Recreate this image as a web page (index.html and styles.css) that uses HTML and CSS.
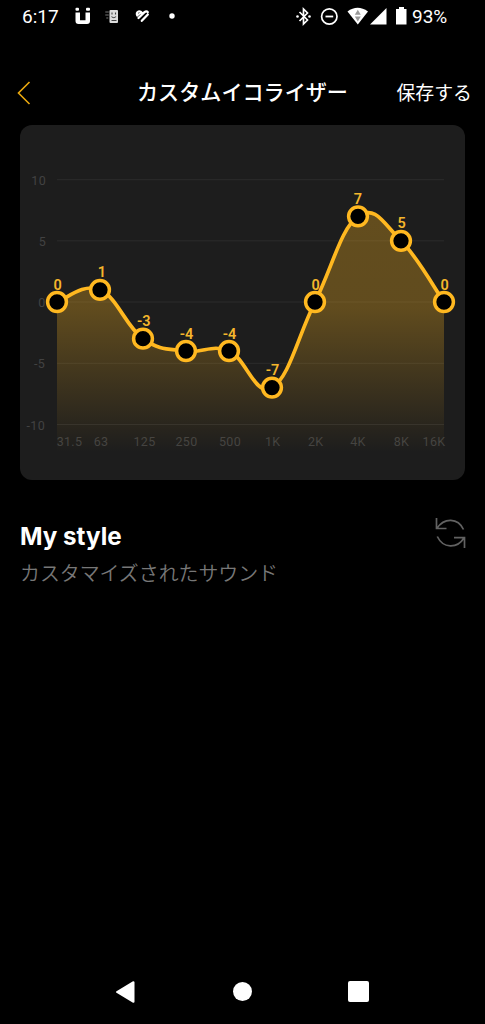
FILE: index.html
```html
<!DOCTYPE html>
<html lang="ja">
<head>
<meta charset="utf-8">
<title>カスタムイコライザー</title>
<link rel="stylesheet" href="styles.css">
</head>
<body>
<div class="screen">
  <div class="status">
    <span class="clock">6:17</span>
    <svg class="notices" width="110" height="33" viewBox="70 0 110 33">
      <g fill="#fff">
        <path d="M75.500 12.500H80V20.300H85.500V12.500H90V21q0 3-3 3H78.500q-3 0-3-3z"/>
        <rect x="75.500" y="7.700" width="3.500" height="3" rx="1"/><rect x="86" y="7.700" width="4" height="3" rx="1"/>
        <rect x="109.500" y="10" width="8.500" height="13" rx="1" fill="#ddd"/>
        <path d="M105.500 12h3M105.500 15h3M106.500 18h2" stroke="#aaa" stroke-width="1.200" stroke-dasharray="1.200 .6"/>
        <path d="M112 12.500v2M115.500 12.500v2M111.500 16.500q2.200 2.500 4.500 0M111.500 20.500h5" stroke="#444" stroke-width="1.100" fill="none"/>
        <circle cx="172" cy="16" r="2.700"/>
      </g>
      <path d="M137.300 15.500Q136 12.500 138.500 11.500Q140.500 11 142 13M138.500 18L144.500 12.200Q146.500 10.500 147.800 12.200M141.800 20.800L147.800 14.500" fill="none" stroke="#fff" stroke-width="2.300" stroke-linecap="round"/>
      <path d="M137.300 15.300L141.500 12.500" stroke="#fff" stroke-width="1.800"/>
    </svg>
    <svg class="signals" width="118" height="33" viewBox="292 0 118 33">
      <path d="M299.500 12l8 8-4 4V9l4 4-8 8" fill="none" stroke="#fff" stroke-width="1.700"/>
      <circle cx="297.500" cy="16.500" r="1.300" fill="#fff"/><circle cx="309.500" cy="16.500" r="1.300" fill="#fff"/>
      <circle cx="329.300" cy="16.500" r="7.700" fill="none" stroke="#fff" stroke-width="1.700"/>
      <path d="M325.500 16.500h7.700" stroke="#fff" stroke-width="1.800"/>
      <path d="M347.500 11.500q10-7.500 20.500 0l-10.200 13z" fill="#fff"/>
      <path d="M354.800 14.800l3-5 3 5zM354.800 16.500h6l-3 5z" fill="#999"/>
      <path d="M370 24.500L386.500 8v16.500z" fill="#fff"/>
      <path d="M399 7h5v2h2.500v15.500h-10.500V9h3z" fill="#fff"/>
    </svg>
    <span class="battery">93%</span>
  </div>

  <header class="header">
    <svg class="back" width="14" height="24" viewBox="0 0 14 24"><path d="M12.500 1L1.500 12l11 11" fill="none" stroke="#eba90f" stroke-width="1.600"/></svg>
    <h1 class="title">カスタムイコライザー</h1>
    <span class="save">保存する</span>
  </header>

  <section class="card">
    <svg class="chart" width="445" height="355" viewBox="20 125 445 355">
      <defs>
        <linearGradient id="fade" gradientUnits="userSpaceOnUse" x1="0" y1="212" x2="0" y2="452">
          <stop offset="0" stop-color="#ffb820" stop-opacity=".31"/>
          <stop offset=".4" stop-color="#ffb820" stop-opacity=".3"/>
          <stop offset="1" stop-color="#ffb820" stop-opacity="0"/>
        </linearGradient>
      </defs>
      <path class="grid" d="M57 179.700H444M57 240.800H444M57 302H444M57 363.300H444M57 424.500H444"/>
      <g class="axis axis-y">
        <text x="46" y="184.800">10</text><text x="46" y="245.500">5</text><text x="45.500" y="307">0</text><text x="45" y="368">-5</text><text x="45" y="429.500">-10</text>
      </g>
      <g class="axis">
        <text x="69.500" y="446">31.5</text><text x="101" y="446">63</text><text x="144.500" y="446">125</text><text x="186.500" y="446">250</text><text x="230" y="446">500</text><text x="272.700" y="446">1K</text><text x="315.700" y="446">2K</text><text x="358" y="446">4K</text><text x="401.500" y="446">8K</text><text x="434" y="446">16K</text>
      </g>
      <path fill="url(#fade)" d="M57 302C65.600 299.600 82.800 282.500 100 289.800C117.200 297.100 125.800 326.500 143 338.700C160.200 350.900 168.800 348.500 186 351C203.200 353.500 211.800 343.700 229 351C246.200 358.300 254.800 397.400 272 387.600C289.200 377.800 297.800 336.300 315 302C332.200 267.700 340.800 228.500 358 216.300C375.200 204.100 383.800 223.700 401 240.800C418.200 257.900 435.400 289.800 444 302V452H57Z"/>
      <path class="curve" d="M57 302C65.600 299.600 82.800 282.500 100 289.800C117.200 297.100 125.800 326.500 143 338.700C160.200 350.900 168.800 348.500 186 351C203.200 353.500 211.800 343.700 229 351C246.200 358.300 254.800 397.400 272 387.600C289.200 377.800 297.800 336.300 315 302C332.200 267.700 340.800 228.500 358 216.300C375.200 204.100 383.800 223.700 401 240.800C418.200 257.900 435.400 289.800 444 302"/>
      <g class="knobs">
        <circle cx="57" cy="302" r="9.400"/><circle cx="100" cy="289.800" r="9.400"/><circle cx="143" cy="338.700" r="9.400"/><circle cx="186" cy="351" r="9.400"/><circle cx="229" cy="351" r="9.400"/><circle cx="272" cy="387.600" r="9.400"/><circle cx="315" cy="302" r="9.400"/><circle cx="358" cy="216.300" r="9.400"/><circle cx="401" cy="240.800" r="9.400"/><circle cx="444" cy="302" r="9.400"/>
      </g>
      <g class="values">
        <text x="57.700" y="289.700">0</text><text x="102" y="277.300">1</text><text x="143.700" y="326.300">-3</text><text x="186.500" y="338.500">-4</text><text x="229.500" y="338.500">-4</text><text x="272.500" y="375">-7</text><text x="315.700" y="289.700">0</text><text x="358" y="204">7</text><text x="401.700" y="228.300">5</text><text x="444.700" y="289.700">0</text>
      </g>
    </svg>
  </section>

  <section class="preset">
    <div>
      <h2 class="name">My style</h2>
      <p class="desc">カスタマイズされたサウンド</p>
    </div>
    <svg class="reset" width="32" height="32" viewBox="434 517 32 32">
      <path d="M436.500 518v10.500H446.500M437 528.300C444 517.500 458 517.500 463.500 529.500M437.300 536.500C443 548.500 457 549 464 538M454 537.700H464.500V548" fill="none" stroke="#626262" stroke-width="1.700"/>
    </svg>
  </section>

  <nav class="nav">
    <svg width="20" height="24" viewBox="0 0 20 24"><path d="M2 12L18.500 2.200V21.800Z" fill="#fff" stroke="#fff" stroke-width="2" stroke-linejoin="round"/></svg>
    <span class="home"></span>
    <span class="recent"></span>
  </nav>
</div>
</body>
</html>
```
FILE: styles.css
```css
* { box-sizing: border-box; margin: 0; padding: 0; }
body { background: #000; color: #fff; font-family: Roboto, "Noto Sans CJK JP", sans-serif; }
.screen { width: 485px; height: 1024px; display: flex; flex-direction: column; overflow: hidden; background: #000; }
.status { height: 33px; display: flex; align-items: center; padding-left: 22px; font-size: 19px; line-height: 33px; }
.clock { width: 48px; }
.signals { margin-left: 112px; }
.battery { margin-left: 2px; }
.header { height: 91px; padding: 27px 13px 0 17px; display: grid; grid-template-columns: 93px 1fr 97px; align-items: center; }
.back { display: block; margin-top: 1px; }
.title { font-size: 21.100px; line-height: 30px; font-weight: 500; text-align: center; white-space: nowrap; margin-top: 2px; }
.save { font-size: 18.900px; line-height: 28px; text-align: right; white-space: nowrap; margin-top: 3px; }
.card { width: 445px; height: 355px; margin: .5px 0 0 20px; border-radius: 12px; background: #1d1d1d; overflow: hidden; }
.chart { display: block; }
.grid { stroke: #2c2c2c; stroke-width: 1; fill: none; }
.axis { fill: #424242; font-size: 12.500px; letter-spacing: .3px; text-anchor: middle; }
.axis-y { text-anchor: end; }
.curve { fill: none; stroke: #ffb820; stroke-width: 3.700; }
.knobs { fill: #000; stroke: #ffb820; stroke-width: 3.500; }
.values { fill: #f4b62c; font-size: 14.500px; font-weight: 600; text-anchor: middle; }
.preset { display: flex; justify-content: space-between; padding: 37px 19px 0 20px; }
.name { font-family: Inter, sans-serif; font-size: 24.200px; line-height: 40px; font-weight: 700; }
.desc { font-size: 19.900px; line-height: 32px; font-weight: 350; color: #777; margin-top: 2px; }
.nav { margin-top: auto; height: 65px; display: flex; align-items: center; justify-content: space-between; padding: 0 116px 0 115px; }
.home { width: 19px; height: 19px; border-radius: 50%; background: #fff; position: relative; left: 1px; }
.recent { width: 21px; height: 21px; border-radius: 2px; background: #fff; }
```
